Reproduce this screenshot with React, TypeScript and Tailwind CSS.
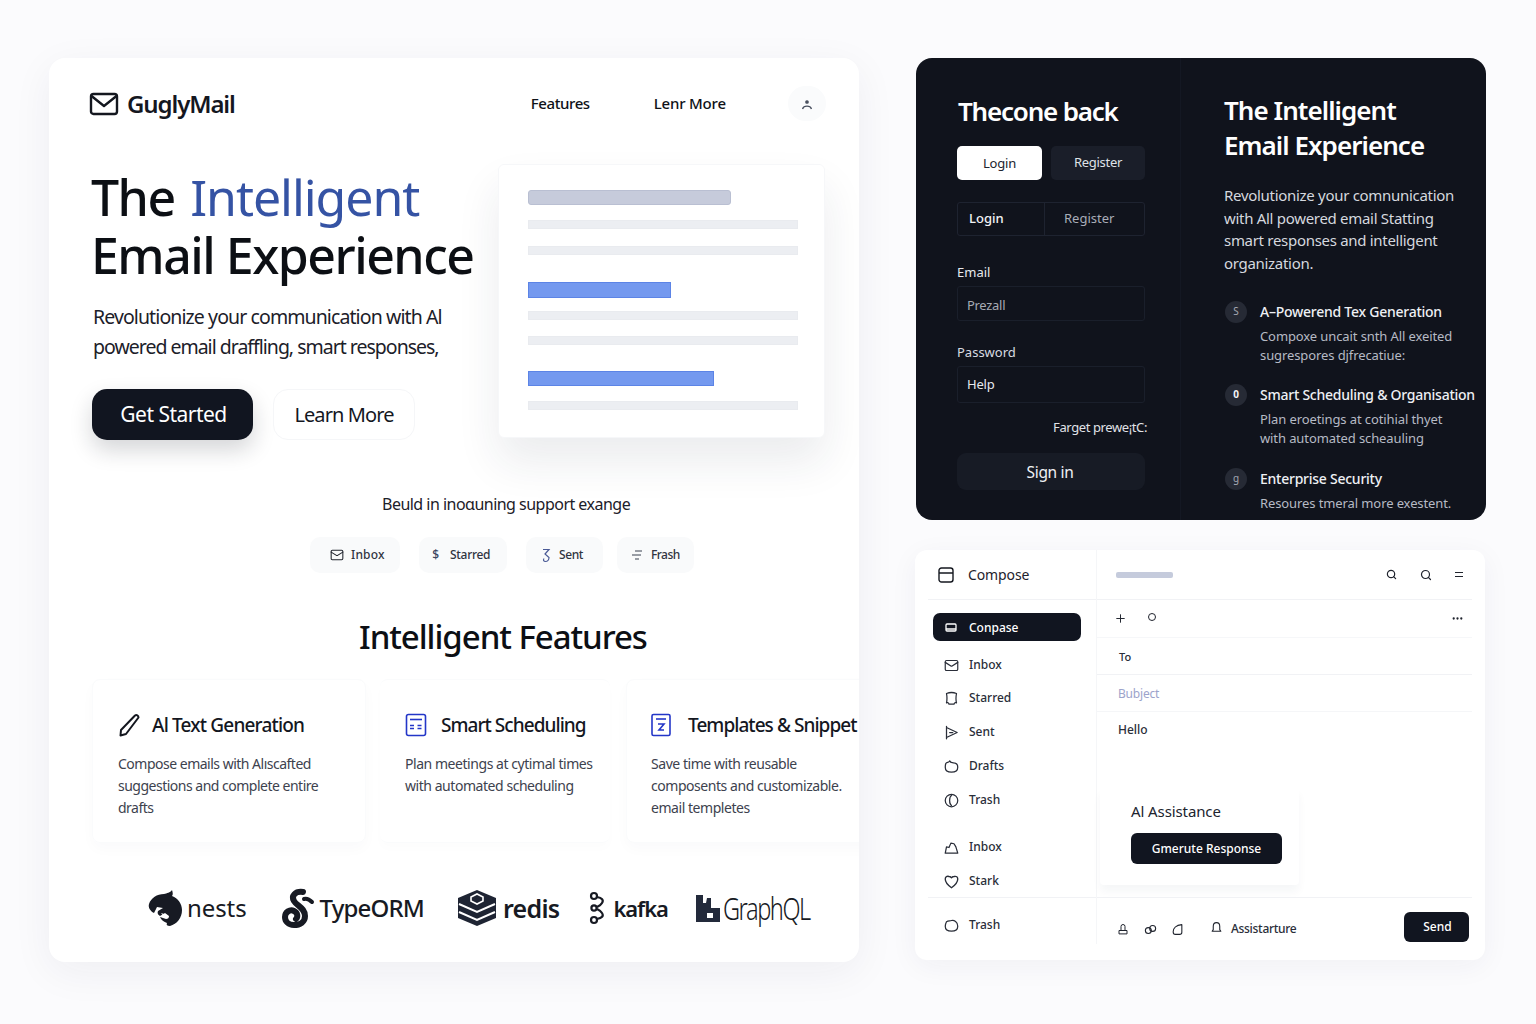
import { FC, ReactNode } from "react";
import { Mail, Search, Plus, MoreHorizontal } from "lucide-react";

const Ico: FC<{ size?: number; className?: string; sw?: number; children: ReactNode }> = ({ size = 15, className, sw = 2, children }) => (
    <svg width={size} height={size} viewBox="0 0 24 24" fill="none" stroke="currentColor" strokeWidth={sw} strokeLinecap="round" strokeLinejoin="round" className={className}>
        {children}
    </svg>
);

const Chip: FC<{ icon: ReactNode; label: string; className: string }> = ({ icon, label, className }) => (
    <div className={`flex h-[36px] items-center rounded-[10px] bg-[#f9fafb] text-[12px] font-medium text-[#30343f] ${className}`}>
        {icon}
        <span>{label}</span>
    </div>
);

const NavRow: FC<{ icon: ReactNode; label: string; className?: string }> = ({ icon, label, className = "" }) => (
    <div className={`flex h-[20px] items-center pl-[29px] text-[12px] font-medium text-[#2a2e39] ${className}`}>
        <span className="flex w-[24px] shrink-0">{icon}</span>
        <span className="ml-[1px]">{label}</span>
    </div>
);

const FeatureDark: FC<{ icon: string; title: string; lines: string[]; className?: string; iconClass?: string }> = ({ icon, title, lines, className = "", iconClass = "text-[#a5a9b4]" }) => (
    <div className={`flex ${className}`}>
        <div className={`ml-[1px] flex h-[22px] w-[22px] shrink-0 items-center justify-center rounded-full bg-[#262a35] text-[10px] ${iconClass}`}>{icon}</div>
        <div className="ml-[13px]">
            <div className="whitespace-nowrap text-[14px] font-medium leading-[22px] tracking-[-0.25px] text-[#eef0f4]">{title}</div>
            <div className="mt-[4px]">
                {lines.map((l) => (
                    <div key={l} className="whitespace-nowrap text-[13px] leading-[19px] tracking-[-0.1px] text-[#b6bac4]">{l}</div>
                ))}
            </div>
        </div>
    </div>
);

const Bar: FC<{ className: string }> = ({ className }) => <div className={`h-[9px] w-[270px] border border-[#e9ebef] bg-[#eceef2] ${className}`} />;

const App: FC = () => {
    return (
        <div className="flex h-[1024px] w-[1536px] overflow-hidden bg-[#fbfbfd] pl-[49px] pt-[58px] font-['Noto_Sans','Open_Sans',sans-serif] text-[#0f1218]">
            {/* left landing card */}
            <div className="relative h-[904px] w-[810px] shrink-0 overflow-hidden rounded-[16px] bg-white shadow-[0_10px_40px_rgba(30,40,70,0.06)]">
                <header className="flex h-[92px] items-center pb-[1px] pl-[40px]">
                    <svg width="30" height="26" viewBox="0 0 30 26" fill="none" stroke="#14171f" strokeWidth="2.4" strokeLinejoin="round" strokeLinecap="round">
                        <rect x="2" y="3" width="26" height="20" rx="2.5" />
                        <path d="M2.5 5l12.5 10L27.5 5" />
                    </svg>
                    <span className="ml-[8px] text-[24px] font-semibold tracking-[-1.1px] text-[#14171f]">GuglyMail</span>
                    <span className="ml-[296px] text-[15px] font-medium tracking-[-0.4px]">Features</span>
                    <span className="ml-[64px] text-[15px] font-medium tracking-[-0.2px]">Lenr More</span>
                    <div className="ml-[62px] flex h-[35px] w-[38px] flex-col items-center justify-center rounded-full bg-[#fafbfc] text-[#4a5160]">
                        <svg width="14" height="14" viewBox="0 0 14 14" fill="none" stroke="currentColor" strokeWidth="1.3">
                            <circle cx="7" cy="5" r="1.2" fill="currentColor" />
                            <path d="M2.5 12c.7-2 2.4-2.8 4.5-2.8s3.8.8 4.5 2.8" />
                        </svg>
                    </div>
                </header>

                <section className="flex pl-[42px] pt-[14px]">
                    <div className="w-[407px] shrink-0">
                        <h1 className="mt-[4px] whitespace-nowrap text-[50px] font-medium tracking-[-1.5px] text-[#0c0f14]">
                            <div className="h-[58px] leading-[58px]">
                                The <span className="ml-[4px] font-normal tracking-[-1.05px] text-[#3553a4]">Intelligent</span>
                            </div>
                            <div className="h-[58px] leading-[58px]">Email Experience</div>
                        </h1>
                        <p className="ml-[2px] mt-[18px] whitespace-nowrap text-[19.5px] leading-[30px] tracking-[-0.9px] text-[#1c2029]">
                            Revolutionize your communication with Al
                            <br />
                            <span className="tracking-[-1px]">powered email draffling, smart responses,</span>
                        </p>
                        <div className="ml-[1px] mt-[27px] flex">
                            <button className="flex h-[51px] w-[161px] items-center justify-center rounded-[15px] bg-[#111520] pl-[2px] text-[21px] tracking-[-0.52px] text-white shadow-[0_10px_22px_rgba(20,25,40,0.18)]">Get Started</button>
                            <button className="ml-[20px] flex h-[51px] w-[142px] items-center justify-center rounded-[15px] border border-[#f5f6f8] bg-white text-[20px] tracking-[-0.9px] text-[#14171f]">Learn More</button>
                        </div>
                    </div>
                    <div className="h-[274px] w-[327px] shrink-0 rounded-[6px] border border-[#f6f7f9] bg-white pl-[29px] pt-[25px] shadow-[0_24px_44px_rgba(30,40,70,0.09)]">
                        <div className="h-[15px] w-[203px] rounded-[3px] border border-[#b9bfd2] bg-[#c6cbdb]" />
                        <Bar className="mt-[15px]" />
                        <Bar className="mt-[17px]" />
                        <div className="mt-[27px] h-[16px] w-[143px] border border-[#5c84e6] bg-[#7499ef]" />
                        <Bar className="mt-[13px]" />
                        <Bar className="mt-[16px]" />
                        <div className="mt-[26px] h-[15px] w-[186px] border border-[#5c84e6] bg-[#7499ef]" />
                        <Bar className="mt-[15px]" />
                    </div>
                </section>

                <div className="mt-[52px] pl-[333px] text-[16px] tracking-[-0.52px] text-[#1c2029]">Beuld in inoɑuning support exange</div>
                <div className="mt-[21px] flex pl-[261px]">
                    <Chip className="w-[90px] pl-[20px] tracking-[0.15px]" label="Inbox" icon={<Mail size={14} strokeWidth={1.8} className="mr-[7px] text-[#20242e]" />} />
                    <Chip className="ml-[19px] w-[88px] pl-[11px] tracking-[-0.3px]" label="Starred" icon={<span className="mr-[9px] w-[11px] text-center text-[12px] text-[#3b4560]">$</span>} />
                    <Chip className="ml-[19px] w-[77px] pl-[15px] tracking-[-0.4px]" label="Sent" icon={
                        <svg width="10" height="15" viewBox="0 0 10 15" fill="none" stroke="#4a5a96" strokeWidth="1.2" className="mr-[8px]">
                            <path d="M2 1.5h6L4 6l4 3.5c0 2-1.5 4-3.5 4S2 12 3 10.5" />
                        </svg>
                    } />
                    <Chip className="ml-[14px] w-[77px] pl-[13px] tracking-[-0.55px]" label="Frash" icon={
                        <svg width="14" height="12" viewBox="0 0 14 12" fill="none" stroke="#3b4150" strokeWidth="1.1" className="mr-[7px]">
                            <path d="M5 2h7M2 6h9M5 10h4" />
                        </svg>
                    } />
                </div>

                <h2 className="mt-[41px] pl-[310px] text-[33px] font-medium leading-[46px] tracking-[-1.05px] text-[#0c0f14]">Intelligent Features</h2>

                <div className="mt-[19px] flex pl-[43px]">
                    <article className="h-[164px] w-[274px] shrink-0 rounded-[8px] border border-[#fafbfc] pl-[25px] pt-[29px] shadow-[0_6px_14px_rgba(30,40,70,0.025)]">
                        <div className="flex h-[32px] items-center">
                            <svg width="23" height="24" viewBox="0 0 23 24" fill="none" stroke="#14171f" strokeWidth="2" strokeLinejoin="round">
                                <path d="M17 2.5c1.5-1 3.5 0 3.5 2L8 21l-5.5 1.5L3 17z" />
                            </svg>
                            <span className="ml-[11px] text-[19px] font-medium tracking-[-0.82px] text-[#14171f]">Al Text Generation</span>
                        </div>
                        <p className="mt-[12px] whitespace-nowrap text-[14px] leading-[22px] tracking-[-0.5px] text-[#3d424e]">Compose emails with Alıscafted<br />suggestions and complete entire<br />drafts</p>
                    </article>
                    <article className="ml-[14px] h-[164px] w-[230px] shrink-0 rounded-[8px] border-y border-[#fafbfc] pl-[25px] pt-[29px] shadow-[0_6px_10px_rgba(30,40,70,0.012)]">
                        <div className="flex h-[32px] items-center">
                            <svg width="22" height="24" viewBox="0 0 22 24" fill="none" stroke="#2336c8" strokeWidth="1.6">
                                <rect x="1.5" y="1.5" width="19" height="21" rx="2" />
                                <path d="M5 6.5h12" />
                                <path d="M5 12.5h4M12.5 12.5h4M5 15.5h4M12.5 15.5h4" strokeWidth="1.6" />
                            </svg>
                            <span className="ml-[14px] text-[19px] font-medium tracking-[-0.95px] text-[#14171f]">Smart Scheduling</span>
                        </div>
                        <p className="mt-[12px] whitespace-nowrap text-[14px] leading-[22px] tracking-[-0.45px] text-[#3d424e]">Plan meetings at cytimal times<br />with automated scheduling</p>
                    </article>
                    <article className="ml-[16px] h-[164px] w-[260px] shrink-0 rounded-[8px] border border-[#fafbfc] pl-[24px] pt-[29px] shadow-[0_6px_14px_rgba(30,40,70,0.025)]">
                        <div className="flex h-[32px] items-center">
                            <svg width="20" height="24" viewBox="0 0 20 24" fill="none" stroke="#2336c8" strokeWidth="1.6">
                                <rect x="1" y="1.5" width="18" height="21" rx="1.5" />
                                <path d="M5 6h10" />
                                <path d="M7 11h6l-5 6h5" strokeWidth="1.6" />
                            </svg>
                            <span className="ml-[17px] whitespace-nowrap text-[19px] font-medium tracking-[-0.95px] text-[#14171f]">Templates &amp; Snippet</span>
                        </div>
                        <p className="mt-[12px] whitespace-nowrap text-[14px] leading-[22px] tracking-[-0.45px] text-[#3d424e]">Save time with reusable<br />composents and customizable.<br />email templetes</p>
                    </article>
                </div>

                <div className="mt-[40px] flex h-[50px] items-center pl-[99px] text-[#171a23]">
                    <svg width="36" height="38" viewBox="0 0 36 38" fill="#171a23">
                        <path d="M24 1c1 3 1 5 0 6 6 2 10 8 10 14 0 8-5 14-12 16-3 0-4-1-3-3-3-1-6-3-7-6l6 2c2 0 3-1 3-3l-4-3-5 3c-2-1-3-3-2-5l5-3-6-1-3 6C2 22 0 18 1 15 3 9 9 5 16 5c3-1 6-1 8-4z" />
                        <path d="M13 24l6 2-2 3z" fill="#fff" />
                    </svg>
                    <span className="ml-[3px] text-[24px] leading-none tracking-[-0.1px]">nests</span>
                    <svg width="34" height="40" viewBox="0 0 34 40" fill="none" stroke="#171a23" strokeWidth="6" strokeLinecap="round" className="ml-[34px]">
                        <path d="M22 4C14 3 10 8 13 13c3 5 11 7 11 15 0 6-5 9-11 9C7 37 4 33 4 29c0-5 5-8 9-6 4 2 4 6 2 8" />
                        <path d="M23 11c3-1 5 0 8 3" strokeWidth="4" />
                    </svg>
                    <span className="ml-[5px] text-[24px] font-medium leading-none tracking-[-0.85px]">TypeORM</span>
                    <svg width="40" height="38" viewBox="0 0 40 38" className="ml-[33px]">
                        <path d="M20 1L39 9v20l-19 8L1 29V9z" fill="#1e2433" />
                        <path d="M2 15l18 8 18-8M2 23l18 8 18-8" stroke="#fff" strokeWidth="2" fill="none" />
                        <path d="M14 8l6-3 6 3v4l-6 3-6-3z" fill="none" stroke="#fff" strokeWidth="1.6" />
                    </svg>
                    <span className="ml-[6px] text-[25px] font-semibold leading-none tracking-[-0.7px]">redis</span>
                    <svg width="18" height="34" viewBox="0 0 18 34" fill="none" stroke="#171a23" strokeWidth="2.2" className="ml-[30px]">
                        <circle cx="5" cy="5" r="3" />
                        <circle cx="5" cy="17" r="2.6" />
                        <circle cx="5" cy="29" r="3" />
                        <path d="M8 6c5 1 7 3 5 6-1 2-3 3-5 4M8 28c5-1 7-3 5-6-1-2-3-3-5-4" />
                    </svg>
                    <span className="ml-[6px] text-[22px] font-semibold leading-none tracking-[-1.1px]">kafka</span>
                    <svg width="24" height="28" viewBox="0 0 24 28" className="ml-[28px]">
                        <path d="M0 1h7v8h3l1-5h4v10h9v14H0z" fill="#232a3b" />
                        <rect x="11" y="19" width="6" height="5" fill="#fff" />
                    </svg>
                    <span className="ml-[3px] origin-left scale-x-[0.76] text-[31px] font-light leading-none tracking-[-1.9px]">GraphQL</span>
                </div>
            </div>

            <div className="ml-[57px] flex w-[570px] shrink-0 flex-col">
                {/* dark login panel */}
                <div className="flex h-[462px] overflow-hidden rounded-[16px] bg-[#10131c] text-white">
                    <div className="w-[265px] shrink-0 border-r border-[#141823] pl-[41px] pt-[35px]">
                        <h3 className="ml-[1px] text-[26px] font-semibold leading-[36px] tracking-[-1.2px]">Thecone back</h3>
                        <div className="mt-[17px] flex">
                            <button className="flex h-[34px] w-[85px] items-center justify-center rounded-[5px] bg-white pt-[1px] text-[13px] tracking-[-0.2px] text-[#20242e]">Login</button>
                            <button className="ml-[9px] flex h-[34px] w-[94px] items-center justify-center rounded-[5px] bg-[#1a1e29] text-[13px] tracking-[-0.3px] text-[#dfe2e8]">Register</button>
                        </div>
                        <div className="mt-[22px] flex h-[34px] w-[188px] items-center rounded-[3px] border border-[#1e2330] text-[13px]">
                            <span className="flex h-full w-[87px] items-center border-r border-[#1e2330] pl-[11px] font-medium text-[#f2f3f6]">Login</span>
                            <span className="ml-[19px] text-[#a9adb8]">Register</span>
                        </div>
                        <div className="mt-[27px] text-[13px] leading-[18px] text-[#e7e9ee]">Email</div>
                        <div className="mt-[5px] flex h-[35px] w-[188px] items-center rounded-[3px] border border-[#1a1f2b] pl-[9px] pt-[4px] text-[13px] tracking-[-0.3px] text-[#a6aab4]">Prezall</div>
                        <div className="mt-[22px] text-[13px] leading-[18px] text-[#d8dbe1]">Password</div>
                        <div className="mt-[5px] flex h-[37px] w-[188px] items-center rounded-[3px] border border-[#1a1f2b] pl-[9px] text-[13px] tracking-[-0.2px] text-[#e7e9ee]">Help</div>
                        <div className="mt-[15px] w-[190px] whitespace-nowrap text-right text-[13px] leading-[18px] tracking-[-0.4px] text-[#e0e2e8]">Farget prewe¡tC:</div>
                        <button className="mt-[17px] flex h-[37px] w-[188px] items-center justify-center rounded-[9px] bg-[#171b25] pr-[2px] pt-[3px] text-[15.5px] tracking-[-0.35px] text-[#eef0f4]">Sign in</button>
                    </div>
                    <div className="pl-[43px] pt-[35px]">
                        <h3 className="text-[26px] font-semibold leading-[35px] tracking-[-0.95px]">The Intelligent<br />Email Experience</h3>
                        <p className="mt-[21px] whitespace-nowrap text-[15px] leading-[22.7px] tracking-[-0.3px] text-[#d5d8df]">Revolutionize your comnunication<br />with All powered email Statting<br />smart responses and intelligent<br />organization.</p>
                        <FeatureDark className="mt-[26px]" icon="S" title="A–Powerend Tex Generation" lines={["Compoxe uncait snth All exeited", "sugrespores djfrecatiue:"]} />
                        <FeatureDark className="mt-[19px]" icon="0" iconClass="font-bold text-[#f2f3f6]" title="Smart Scheduling & Organisation" lines={["Plan eroetings at cotihial thyet", "with automated scheauling"]} />
                        <FeatureDark className="mt-[20px]" icon="g" title="Enterprise Security" lines={["Resoures tmeral more exestent."]} />
                    </div>
                </div>

                {/* compose panel */}
                <div className="ml-[-1px] mt-[30px] flex h-[410px] w-[570px] overflow-hidden rounded-[12px] bg-white shadow-[0_6px_28px_rgba(30,40,70,0.05)]">
                    <aside className="mb-[16px] w-[182px] shrink-0 border-r border-[#f5f6f8]">
                        <div className="ml-[13px] flex h-[50px] items-center border-b border-[#f1f2f5] pl-[10px]">
                            <svg width="16" height="16" viewBox="0 0 16 16" fill="none" stroke="#14171f" strokeWidth="1.4">
                                <rect x="1" y="1" width="14" height="14" rx="2.5" />
                                <path d="M1 6h14" />
                            </svg>
                            <span className="ml-[14px] text-[14px] tracking-[-0.1px] text-[#1e222c]">Compose</span>
                        </div>
                        <div className="ml-[18px] mt-[13px] flex h-[28px] w-[148px] items-center rounded-[7px] bg-[#111520] pl-[12px] pt-[1px] text-[12px] font-medium text-white">
                            <svg width="12" height="10" viewBox="0 0 12 10" fill="none" stroke="#fff" strokeWidth="1.3" className="mr-[12px]">
                                <rect x="1" y="1" width="10" height="7" rx="1" />
                                <path d="M1 6h10" />
                            </svg>
                            Conpase
                        </div>
                        <NavRow className="mt-[14px]" label="Inbox" icon={<Mail size={15} strokeWidth={1.9} />} />
                        <NavRow className="mt-[13px]" label="Starred" icon={<Ico><path d="M4 4c5-2 11-2 16 0-1 5-1 11 0 15-2-1-3 0-4 2H8c-1-2-2-3-4-2 1-5 1-10 0-15z" /></Ico>} />
                        <NavRow className="mt-[14px]" label="Sent" icon={<Ico><path d="M4 2v20M4 4l17 8-17 8" /><path d="M9 12h5" /></Ico>} />
                        <NavRow className="mt-[14px]" label="Drafts" icon={<Ico><path d="M3 7c2-2 5-1 6-4 1 2 3 3 6 3 4 0 7 2 7 7 0 6-4 8-10 8S2 19 2 13c0-2 0-4 1-6z" /></Ico>} />
                        <NavRow className="mt-[14px]" label="Trash" icon={<Ico><circle cx="12" cy="12" r="10" /><path d="M12 4c-4 2-4 14 0 16" /></Ico>} />
                        <NavRow className="mt-[27px]" label="Inbox" icon={<Ico><path d="M2 21l2-10 4 1 3-7 5 1 3 5 3 10z" /></Ico>} />
                        <NavRow className="mt-[14px]" label="Stark" icon={<Ico sw={2.2}><path d="M12 22C5 17 2 13 2 8c0-4 3-5 6-4 2 0 3 1 4 2 1-1 2-2 4-2 4-1 6 1 6 4 0 5-3 9-10 14z" /></Ico>} />
                        <div className="ml-[13px] mt-[6px] border-t border-[#f1f2f5]" />
                        <NavRow className="mt-[17px]" label="Trash" icon={<Ico><path d="M4 6c3-2 5-1 8-2 4-1 10 2 10 9 0 6-5 8-10 8-6 0-10-3-10-8 0-3 1-5 2-7z" /></Ico>} />
                    </aside>
                    <main className="flex min-w-0 flex-1 flex-col">
                        <div className="mr-[13px] flex h-[50px] shrink-0 items-center border-b border-[#f1f2f5] pl-[19px] pr-[8px] text-[#20242e]">
                            <div className="h-[6px] w-[57px] rounded-[2px] bg-[#c5cbdc]" />
                            <Search size={11} strokeWidth={2.6} className="ml-[213px]" />
                            <Search size={12} strokeWidth={2.4} className="ml-[23px]" />
                            <div className="ml-[23px] h-[5px] w-[8px] border-y border-[#20242e]" />
                        </div>
                        <div className="mr-[13px] flex h-[38px] shrink-0 items-center border-b border-[#f6f7f9] pl-[17px] pr-[8px] text-[#20242e]">
                            <Plus size={13} strokeWidth={1.8} />
                            <div className="ml-[21px] mt-[-3px] h-[8px] w-[8px] rounded-full border border-[#20242e]" />
                            <MoreHorizontal size={13} strokeWidth={2.2} className="ml-auto" />
                        </div>
                        <div className="mr-[13px] flex h-[37px] shrink-0 items-center border-b border-[#f1f2f5] pl-[22px] pt-[2px] text-[11px] font-medium text-[#2a2e39]">To</div>
                        <div className="mr-[13px] flex h-[37px] shrink-0 items-center border-b border-[#f5f6f8] pl-[21px] pt-[1px] text-[12px] tracking-[-0.2px] text-[#9ca3cb]">Bubject</div>
                        <div className="flex h-[35px] shrink-0 items-center pl-[21px] text-[12px] font-medium text-[#2a2e39]">Hello</div>
                        <div className="ml-[3px] mt-[40px] h-[98px] w-[199px] shrink-0 rounded-[4px] pl-[31px] pt-[13px] shadow-[0_7px_9px_rgba(30,40,70,0.04)]">
                            <div className="text-[15px] leading-[22px] tracking-[-0.1px] text-[#20242e]">Al Assistance</div>
                            <button className="mt-[11px] flex h-[31px] w-[151px] items-center justify-center rounded-[6px] bg-[#111520] text-[12px] font-medium text-white">Gmerute Response</button>
                        </div>
                        <div className="mr-[13px] mt-[12px] flex h-[63px] shrink-0 items-center border-t border-[#f1f2f5] pl-[20px] text-[#20242e]">
                            <Ico size={12}><path d="M4 21v-6h16v6zM8 15V7a4 4 0 0 1 8 0v8" /></Ico>
                            <Ico size={13} className="ml-[15px]"><circle cx="8" cy="14" r="5.5" /><circle cx="16" cy="10" r="5.5" /></Ico>
                            <Ico size={13} className="ml-[14px]"><path d="M20 3v14c0 3-2 4-4 4H8c-3 0-4-2-4-5 0-6 5-12 16-13z" /></Ico>
                            <Ico size={13} className="ml-[26px] mt-[-3px]"><path d="M12 3c-4 0-6 3-6 7v6l-2 3h16l-2-3v-6c0-4-2-7-6-7z" /></Ico>
                            <span className="ml-[8px] text-[12px] font-medium tracking-[-0.3px] text-[#2a2e39]">Assistarture</span>
                            <button className="ml-auto mr-[3px] mt-[-5px] flex h-[30px] w-[65px] items-center justify-center rounded-[6px] bg-[#111520] pl-[2px] text-[12px] font-medium text-white">Send</button>
                        </div>
                    </main>
                </div>
            </div>
        </div>
    );
};

export default App;
